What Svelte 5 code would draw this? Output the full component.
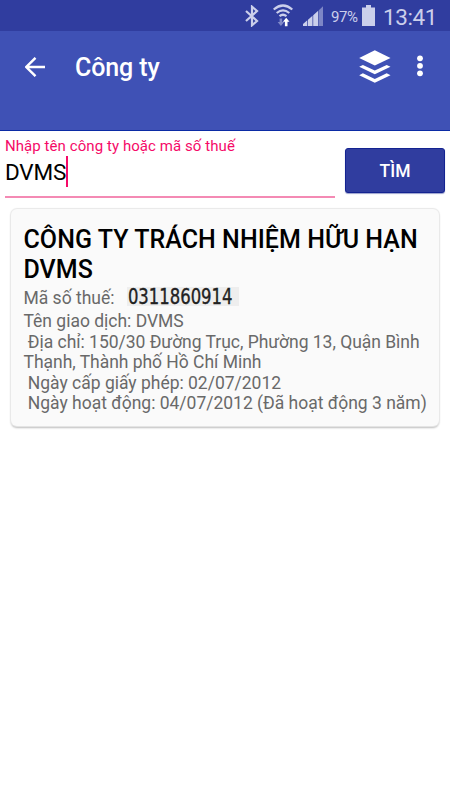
<script>
  let query = $state('DVMS');
  const details = [
    'Tên giao dịch: DVMS',
    ' Địa chỉ: 150/30 Đường Trục, Phường 13, Quận Bình\nThạnh, Thành phố Hồ Chí Minh',
    ' Ngày cấp giấy phép: 02/07/2012',
    ' Ngày hoạt động: 04/07/2012 (Đã hoạt động 3 năm)'
  ];
</script>

<div class="screen">
  <div class="status">
    <svg class="bt" width="14" height="22" viewBox="0 0 14 22"><path d="M1 6l11 10-5 4.300V1.700L12 6 1 16" /></svg>
    <svg class="wifi" width="20" height="23" viewBox="0 0 20 23">
      <g fill="none" stroke="#cbcfeb" stroke-width="2.200"><path d="M.7 5.500q9.300-8 18.600 0M3.700 9q6.300-5.300 12.600 0M6.500 12.200q3.500-2.900 7 0" /></g>
      <path fill="#7f88c8" d="M6.600 14.500h2.600V18h2l-3.300 4-3.300-4h2z" />
      <path fill="#fff" d="M13.200 13.800l3.300 3.900h-2v4.500h-2.600v-4.500h-2z" />
    </svg>
    <svg class="signal" width="21" height="20" viewBox="0 0 21 20">
      <path fill="#cbcfeb" d="M0 20v-2l4.300-3.700V20zM5 20v-6.300l4.500-3.900V20zM10.200 20V9.300l5-4.500V20z" />
      <path fill="#7d86c6" d="M15.800 20V4.200L20 .3V20z" />
    </svg>
    <span class="percent">97%</span>
    <svg class="battery" width="13" height="21" viewBox="0 0 13 21"><path fill="#cbcfeb" d="M4 0h5v2.500h4V21H0V2.500h4z" /></svg>
    <span class="clock">13:41</span>
  </div>

  <header>
    <svg class="back" width="20" height="20" viewBox="0 0 20 20"><path d="M20 10H2M10.500.8L1.300 10l9.200 9.200" /></svg>
    <h1>Công ty</h1>
    <svg class="layers" width="32" height="33" viewBox="0 0 32 33">
      <path d="M15.800.2L31.500 8 15.800 15.500.2 8z" />
      <path d="M.2 16.800l3.700-1.900 11.900 5.700 11.900-5.700 3.800 1.900-15.700 7.500zM.2 25.200l3.700-1.900L15.800 29l11.900-5.700 3.800 1.900-15.700 7.600z" />
    </svg>
    <svg class="more" width="6" height="22" viewBox="0 0 6 22"><circle cx="3" cy="3.300" r="2.900" /><circle cx="3" cy="10.800" r="2.900" /><circle cx="3" cy="18.300" r="2.900" /></svg>
  </header>

  <div class="search">
    <div class="field">
      <span class="label">Nhập tên công ty hoặc mã số thuế</span>
      <div class="value"><span>{query}</span><i class="caret"></i></div>
    </div>
    <button type="button">TÌM</button>
  </div>

  <article>
    <h2>CÔNG TY TRÁCH NHIỆM HỮU HẠN DVMS</h2>
    <div class="tax"><span>Mã số thuế:</span><b><span>0311860914</span></b></div>
    {#each details as line}
      <p>{line}</p>
    {/each}
  </article>
</div>

<style>
  :global(body) { margin: 0; background: #fff; }
  .screen { width: 450px; height: 800px; overflow: hidden; background: #fff; font-family: Roboto, "Noto Sans", sans-serif; }
  .status { box-sizing: border-box; display: flex; align-items: flex-start; height: 31px; background: #303d9f; color: #cbcfeb; }
  .status svg { flex: none; }
  .bt { margin: 5px 0 0 245px; fill: none; stroke: #cbcfeb; stroke-width: 2.200; }
  .wifi { margin: 4px 0 0 14px; }
  .signal { margin: 6px 0 0 10px; }
  .percent { width: 31px; margin-left: 7px; font-size: 15px; line-height: 34px; letter-spacing: -.4px; }
  .battery { margin-top: 5px; }
  .clock { margin-left: 8px; font-size: 22.500px; line-height: 35px; letter-spacing: -.4px; }
  header { box-sizing: border-box; display: flex; align-items: flex-start; height: 100px; padding: 0 27px 0 25px; background: #3f51b5; border-bottom: 1px solid #0b2ba5; }
  header svg { flex: none; }
  .back { margin-top: 26px; fill: none; stroke: #fff; stroke-width: 2.400; }
  h1 { flex: 1; margin: 22px 0 0 30px; color: #fff; font-size: 25px; line-height: 30px; font-weight: 500; letter-spacing: -.1px; }
  .layers, .more { fill: #fff; }
  .layers { margin-top: 19px; }
  .more { margin: 24px 0 0 26px; }
  .search { display: flex; justify-content: space-between; height: 78px; padding: 0 5px; }
  .field { box-sizing: border-box; width: 330px; height: 67px; border-bottom: 2px solid #f48ab4; padding-top: 6px; }
  .label { display: block; color: #f50a68; font-size: 15px; line-height: 18px; letter-spacing: .07px; white-space: nowrap; }
  .value { display: flex; height: 32px; font-size: 22.500px; line-height: 35px; letter-spacing: -.2px; color: #000; }
  .caret { width: 2px; height: 31px; margin-top: 1px; background: #f50a68; }
  button { box-sizing: border-box; width: 100px; height: 45px; margin-top: 17px; padding: 0; border: 1px solid #142391; border-radius: 3px; background: #303d9f; color: #fff; font: 500 17.500px/44px Roboto, sans-serif; box-shadow: 0 1px 1px #9aa0cc; }
  article { box-sizing: border-box; width: 428px; height: 217px; margin-left: 11px; padding: 16px 0 0 12.500px; border-radius: 6px; background: #fafafa; box-shadow: 0 0 1px 1px #e8e8e8, 0 2px 2px #bbb; }
  h2 { margin: 0; color: #000; font-size: 25px; line-height: 29.500px; font-weight: 500; letter-spacing: .05px; }
  .tax { display: flex; align-items: center; height: 27px; color: #696969; font-size: 17.500px; letter-spacing: -.01px; }
  .tax b { box-sizing: border-box; width: 112px; height: 19px; margin: -2px 0 0 12.500px; padding-left: 1px; background: #eee; color: #222; font: 400 18.300px/19px "DejaVu Sans Condensed", "DejaVu Sans", sans-serif; }
  .tax b span { display: block; transform: scaleY(1.12); -webkit-text-stroke: .3px #222; }
  p { margin: 0; color: #696969; font-size: 17.500px; line-height: 20.500px; letter-spacing: -.01px; white-space: pre; }
  p:nth-of-type(2) { letter-spacing: -.03px; }
</style>
